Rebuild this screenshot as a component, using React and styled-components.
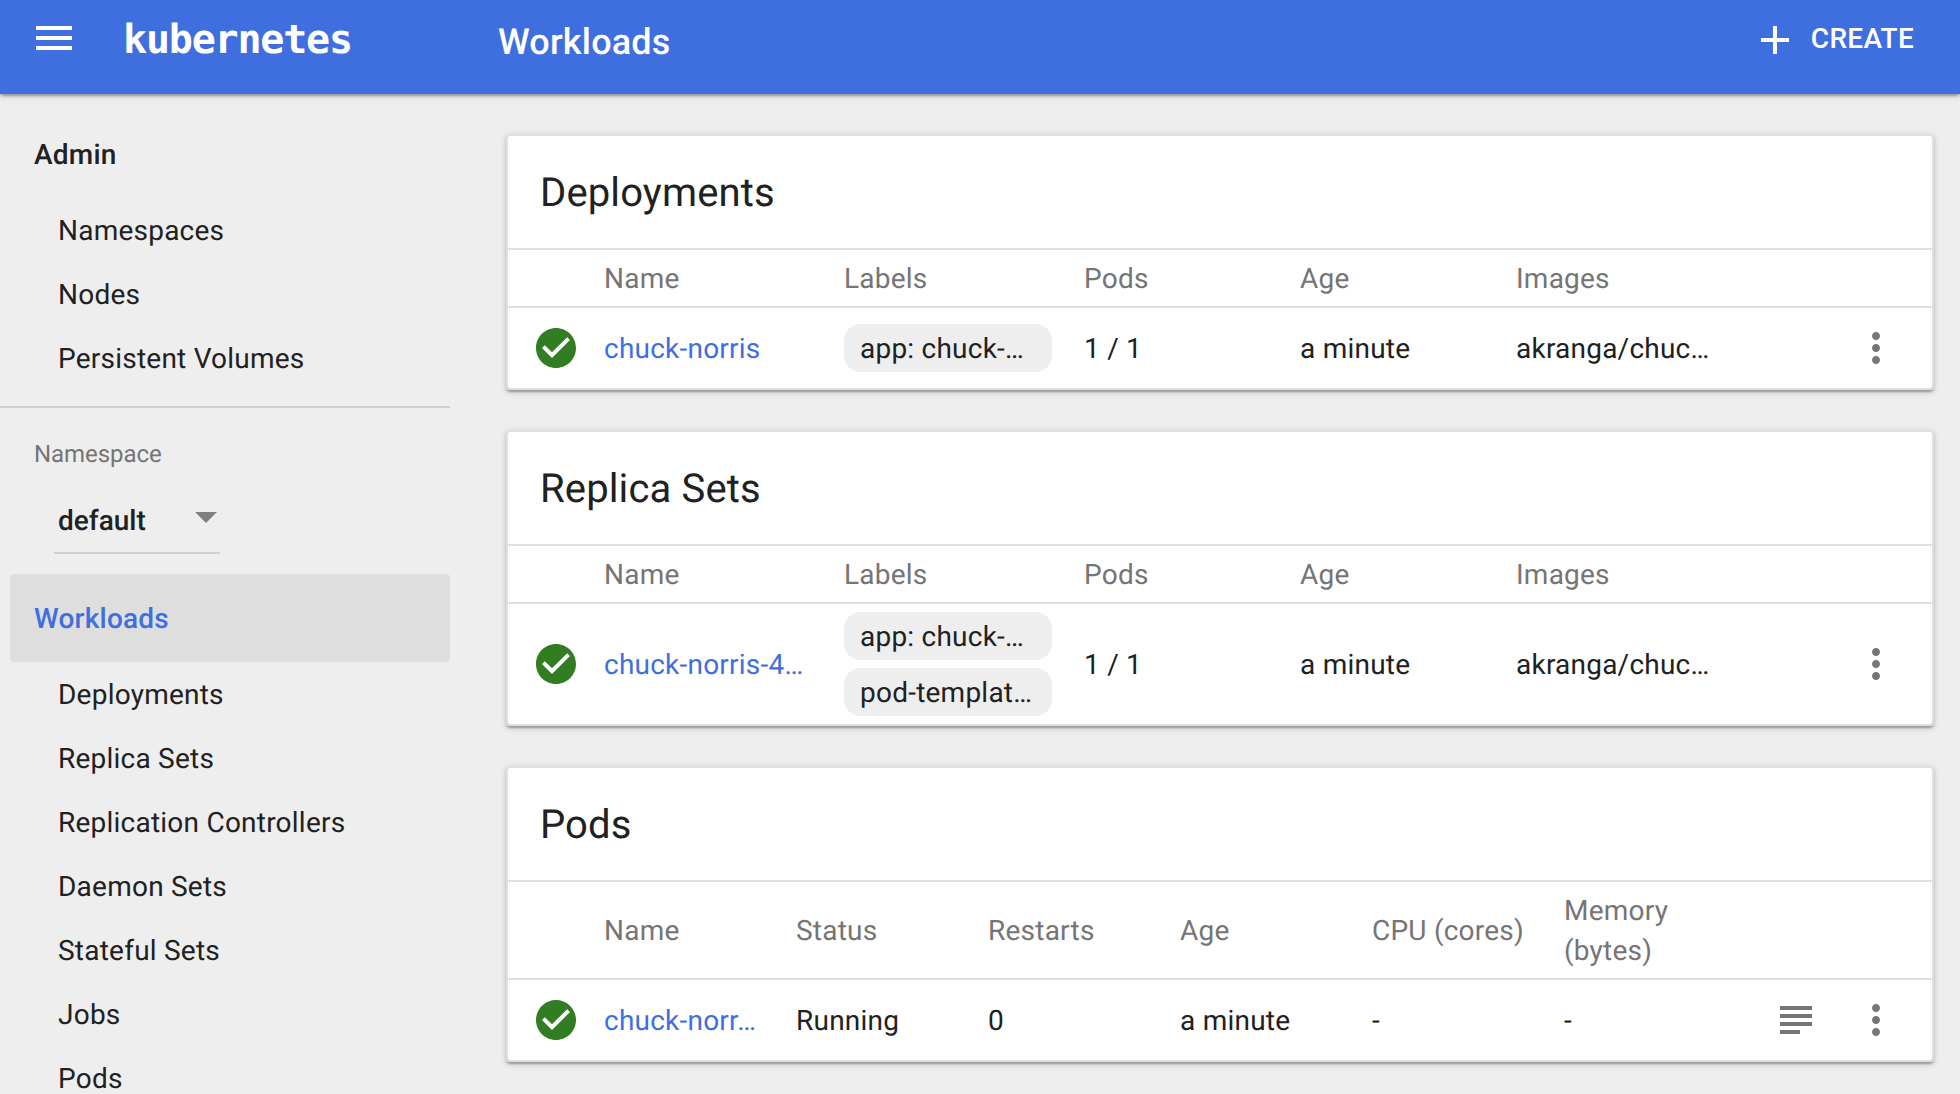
import React from "react";
import styled, { createGlobalStyle } from "styled-components";

const Global = createGlobalStyle`
  * { box-sizing: border-box; }
  html, body { margin: 0; padding: 0; background: #eeeeee; overflow: hidden; }
  body {
    font-family: Roboto, "Liberation Sans", sans-serif;
    font-size: 28px;
    line-height: 40px;
    letter-spacing: 0.23px;
    text-rendering: geometricPrecision;
    color: #212121;
  }
`;

const Page = styled.div`
  display: flex;
  flex-direction: column;
  width: 100%;
  height: 1094px;
  overflow: hidden;
`;

const Toolbar = styled.header`
  flex: none;
  display: flex;
  align-items: flex-start;
  height: 94px;
  padding: 14px 46px 0 30px;
  background: #3f6fde;
  color: #fff;
  z-index: 1;
  box-shadow: 0 2px 6px rgba(0, 0, 0, 0.2), 0 2px 2px rgba(0, 0, 0, 0.14), 0 4px 2px -2px rgba(0, 0, 0, 0.12);
`;

const Icon = styled.svg`
  flex: none;
  display: block;
  width: ${(p) => p.$size || 48}px;
  height: ${(p) => p.$size || 48}px;
  fill: ${(p) => p.$color || "currentColor"};
`;

const Brand = styled.div`
  width: 375px;
  margin: 2px 0 0 45px;
  font: bold 40px/48px "DejaVu Sans Mono", monospace;
  letter-spacing: -1.2px;
`;

const PageTitle = styled.h1`
  flex: 1;
  margin: 4px 0 0;
  font-size: 36px;
  line-height: 48px;
  font-weight: 500;
  letter-spacing: 0.18px;
`;

const CreateButton = styled.button`
  display: flex;
  gap: 12px;
  padding: 2px 0 0;
  border: 0;
  background: none;
  color: inherit;
  font: inherit;
  font-weight: 500;
  letter-spacing: 0.28px;
`;

const CreateLabel = styled.span`
  line-height: 44px;
  margin-top: 1px;
`;

const Body = styled.div`
  flex: 1;
  display: flex;
  min-height: 0;
`;

const Sidebar = styled.nav`
  flex: none;
  width: 450px;
  padding-top: 16px;
`;

const NavGroup = styled.a`
  display: flex;
  align-items: center;
  height: 88px;
  margin-left: 10px;
  padding: 2px 0 0 24px;
  border-radius: 4px;
  font-weight: 500;
  background: ${(p) => (p.$active ? "#dedede" : "transparent")};
  color: ${(p) => (p.$active ? "#3f6fde" : "#212121")};
`;

const NavItem = styled.a`
  display: flex;
  align-items: center;
  height: 64px;
  padding: 2px 0 0 58px;
`;

const Divider = styled.hr`
  height: 2px;
  margin: 16px 0 0;
  border: 0;
  background: #d0d0d0;
`;

const FieldLabel = styled.div`
  padding: 26px 0 0 34px;
  font-size: 24px;
  letter-spacing: -0.05px;
  color: #757575;
`;

const Select = styled.div`
  display: flex;
  justify-content: space-between;
  width: 166px;
  height: 68px;
  margin: 12px 0 20px 54px;
  padding: 15px 3px 0 4px;
  border-bottom: 2px solid #d0d0d0;
  font-weight: 500;
  letter-spacing: 0;
`;

const Caret = styled.span`
  margin-top: 11px;
  width: 0;
  height: 0;
  border-left: 11px solid transparent;
  border-right: 11px solid transparent;
  border-top: 11px solid #808080;
`;

const Main = styled.main`
  flex: 1;
  display: flex;
  flex-direction: column;
  gap: 40px;
  padding: 40px 26px 0 56px;
`;

const Card = styled.section`
  border: 2px solid #e0e0e0;
  border-radius: 4px;
  background: #fff;
  box-shadow: 0 2px 6px rgba(0, 0, 0, 0.2), 0 2px 2px rgba(0, 0, 0, 0.14), 0 4px 2px -2px rgba(0, 0, 0, 0.12);
`;

const CardTitle = styled.h2`
  margin: 0;
  padding: 2px 32px 0;
  font-size: 40px;
  font-weight: 400;
  line-height: 110px;
  letter-spacing: 0.14px;
`;

const Row = styled.div`
  display: grid;
  grid-template-columns: ${(p) => p.$columns};
  align-items: center;
  min-height: ${(p) => (p.$head ? 58 : 82)}px;
  padding: 8px 32px 8px 24px;
  border-top: 2px solid #e0e0e0;
  color: ${(p) => (p.$head ? "#757575" : "#212121")};
`;

const Cell = styled.div`
  margin: 1px 0 -1px;
  padding-right: ${(p) => (p.$tight ? 48 : 24)}px;
`;

const NameLink = styled.a`
  margin: 1px 0 -1px;
  color: #3f6fde;
  white-space: nowrap;
`;

const Chips = styled.div`
  display: flex;
  flex-direction: column;
  gap: 8px;
  width: 208px;
`;

const Chip = styled.span`
  height: 48px;
  padding: 5px 16px 3px;
  border-radius: 16px;
  background: #eeeeee;
  white-space: nowrap;
`;

const Actions = styled.div`
  display: flex;
  justify-content: flex-end;
  gap: 32px;
  margin: -8px 0;
`;

const WORKLOAD_COLUMNS = "72px 240px 240px 216px 216px 1fr 80px";
const POD_COLUMNS = "72px repeat(5, 192px) 184px 1fr";

const MenuIcon = () => (
  <Icon viewBox="0 0 24 24"><path d="M3 18h18v-2H3v2zm0-5h18v-2H3v2zm0-7v2h18V6H3z" /></Icon>
);
const AddIcon = () => (
  <Icon viewBox="0 0 24 24"><path d="M19 13h-6v6h-2v-6H5v-2h6V5h2v6h6v2z" /></Icon>
);
const OkIcon = () => (
  <Icon viewBox="0 0 24 24" $color="#327d22">
    <path d="M12 2C6.48 2 2 6.48 2 12s4.48 10 10 10 10-4.48 10-10S17.52 2 12 2zm-2 15l-5-5 1.41-1.41L10 14.17l7.59-7.59L19 8l-9 9z" />
  </Icon>
);
const MoreIcon = () => (
  <Icon viewBox="0 0 24 24" $color="#757575">
    <path d="M12 8c1.1 0 2-.9 2-2s-.9-2-2-2-2 .9-2 2 .9 2 2 2zm0 2c-1.1 0-2 .9-2 2s.9 2 2 2 2-.9 2-2-.9-2-2-2zm0 6c-1.1 0-2 .9-2 2s.9 2 2 2 2-.9 2-2-.9-2-2-2z" />
  </Icon>
);
const LogsIcon = () => (
  <Icon viewBox="0 0 48 48" $color="#757575">
    <path d="M8 10h32v4H8zM8 18h32v4H8zM8 26h32v4H8zM8 34h20v4H8z" />
  </Icon>
);

function WorkloadCard({ title, name, labels, image }) {
  return (
    <Card>
      <CardTitle>{title}</CardTitle>
      <Row $head $columns={WORKLOAD_COLUMNS}>
        <span />
        {["Name", "Labels", "Pods", "Age", "Images"].map((h) => <Cell key={h}>{h}</Cell>)}
      </Row>
      <Row $columns={WORKLOAD_COLUMNS}>
        <OkIcon />
        <NameLink>{name}</NameLink>
        <Chips>{labels.map((l) => <Chip key={l}>{l}</Chip>)}</Chips>
        <Cell>1 / 1</Cell>
        <Cell>a minute</Cell>
        <Cell>{image}</Cell>
        <Actions><MoreIcon /></Actions>
      </Row>
    </Card>
  );
}

export default function App() {
  return (
    <Page>
      <Global />
      <Toolbar>
        <MenuIcon />
        <Brand>kubernetes</Brand>
        <PageTitle>Workloads</PageTitle>
        <CreateButton>
          <AddIcon />
          <CreateLabel>CREATE</CreateLabel>
        </CreateButton>
      </Toolbar>
      <Body>
        <Sidebar>
          <NavGroup>Admin</NavGroup>
          {["Namespaces", "Nodes", "Persistent Volumes"].map((t) => <NavItem key={t}>{t}</NavItem>)}
          <Divider />
          <FieldLabel>Namespace</FieldLabel>
          <Select>default<Caret /></Select>
          <NavGroup $active>Workloads</NavGroup>
          {["Deployments", "Replica Sets", "Replication Controllers", "Daemon Sets", "Stateful Sets", "Jobs", "Pods"].map((t) => (
            <NavItem key={t}>{t}</NavItem>
          ))}
        </Sidebar>
        <Main>
          <WorkloadCard title="Deployments" name="chuck-norris" labels={["app: chuck-…"]} image="akranga/chuc…" />
          <WorkloadCard title="Replica Sets" name="chuck-norris-4…" labels={["app: chuck-…", "pod-templat…"]} image="akranga/chuc…" />
          <Card>
            <CardTitle>Pods</CardTitle>
            <Row $head $columns={POD_COLUMNS}>
              <span />
              {["Name", "Status", "Restarts", "Age"].map((h) => <Cell key={h}>{h}</Cell>)}
              <Cell>CPU (cores)</Cell>
              <Cell $tight>Memory (bytes)</Cell>
            </Row>
            <Row $columns={POD_COLUMNS}>
              <OkIcon />
              <NameLink>chuck-norr…</NameLink>
              <Cell>Running</Cell>
              <Cell>0</Cell>
              <Cell>a minute</Cell>
              <Cell>-</Cell>
              <Cell>-</Cell>
              <Actions><LogsIcon /><MoreIcon /></Actions>
            </Row>
          </Card>
        </Main>
      </Body>
    </Page>
  );
}
